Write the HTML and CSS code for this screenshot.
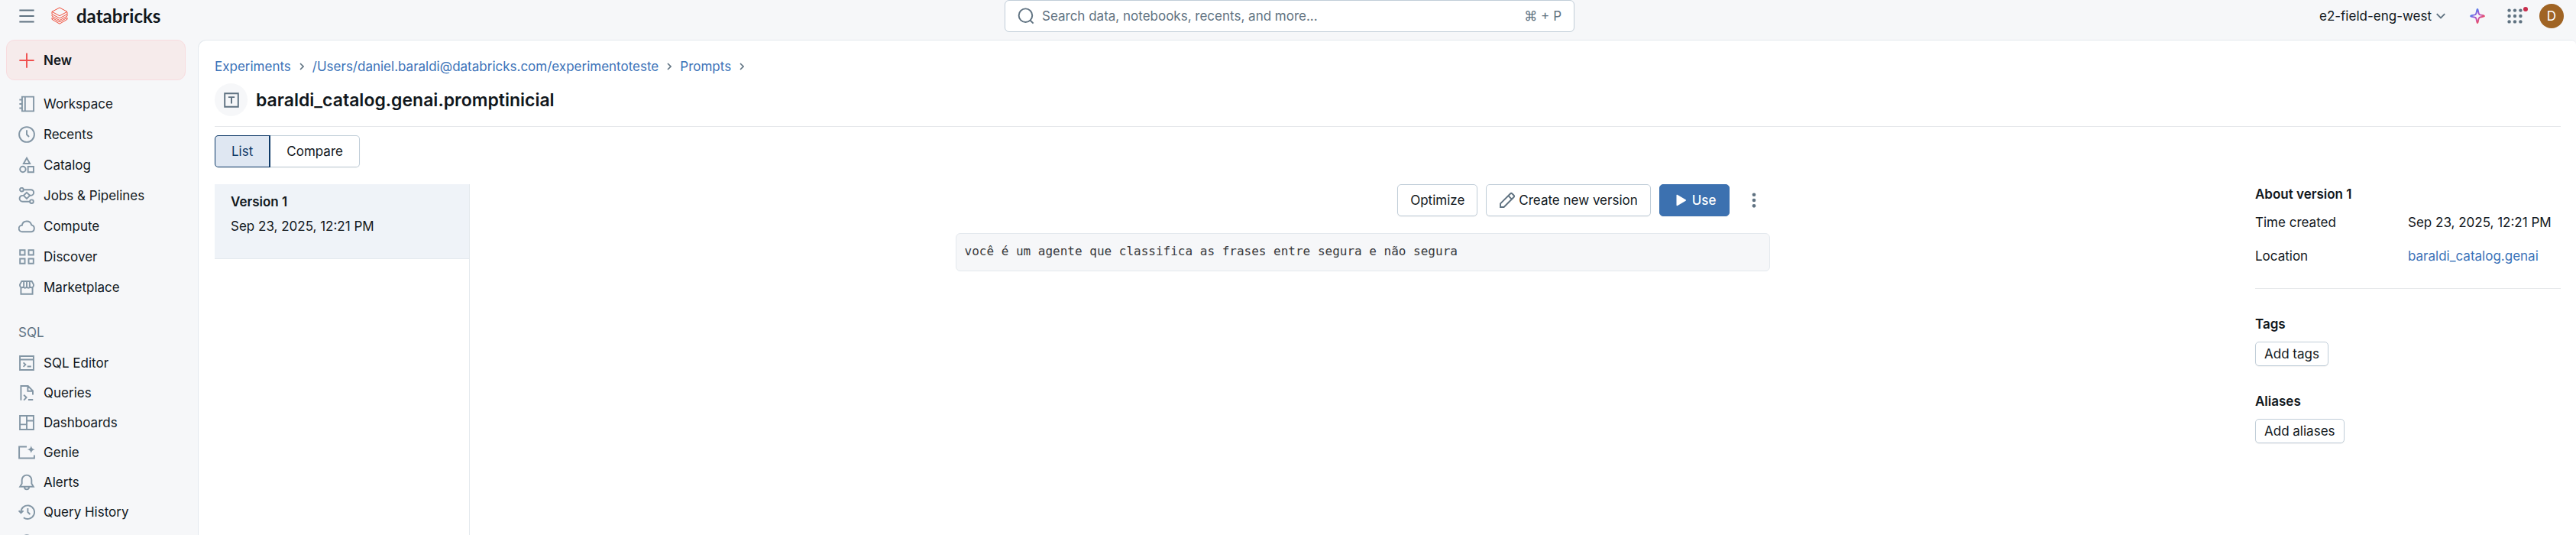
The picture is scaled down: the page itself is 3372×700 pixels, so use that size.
FILE: index.html
```html
<!DOCTYPE html>
<html lang="en">
<head>
<meta charset="utf-8">
<title>baraldi_catalog.genai.promptinicial</title>
<link rel="stylesheet" href="styles.css">
</head>
<body>
<header class="topbar">
  <div class="brand">
    <button class="icon-button" aria-label="Menu"><svg class="icon" viewBox="0 0 16 16"><path d="M1 2.600h14M1 8h14M1 13.400h14"/></svg></button>
    <a class="logo" href="#">
      <svg class="logo-mark" viewBox="0 0 22 24"><path d="M1 6.300 11 1l10 5.300L11 11.700zM1 6.300v3.200l10 5.400 10-5.400V7M1 12l10 5.600L21 12V9.500M1 12v-1.500M1 14.200v2.100l10 5.900 10-5.900v-2.200L11 19.800 1 14.200"/></svg>
      <span class="logo-text">databricks</span>
    </a>
  </div>
  <div class="search">
    <svg class="icon" viewBox="0 0 16 16"><circle cx="7.600" cy="7.400" r="6.400"/><path d="m12 12 3 3"/></svg>
    <input class="search-input" type="text" aria-label="Search" placeholder="Search data, notebooks, recents, and more...">
    <span class="shortcut">⌘ + P</span>
  </div>
  <div class="account">
    <button class="workspace-button">e2-field-eng-west<svg class="chevron" viewBox="0 0 12 12"><path d="m1.500 3.500 4.500 4.500 4.500-4.500"/></svg></button>
    <button class="icon-button" aria-label="Assistant"><svg class="icon" viewBox="0 0 16 16"><defs><linearGradient id="spark" x1="0" y1="0" x2="1" y2="1"><stop offset=".2" stop-color="#4a7ff0"/><stop offset=".5" stop-color="#b44ac8"/><stop offset=".8" stop-color="#f0505a"/></linearGradient></defs><path class="spark" d="M8 1.500c.8 0 .6 4.200 1.800 5s4.700.7 4.700 1.500-3.500.6-4.700 1.500-1 5-1.800 5-.6-4.200-1.800-5S1.500 8.800 1.500 8s3.500-.7 4.700-1.500 1-5 1.800-5Z"/></svg></button>
    <button class="icon-button apps" aria-label="Apps"><svg class="icon solid" viewBox="0 0 16 16"><circle cx="2.600" cy="2.600" r="1.600"/><circle cx="8" cy="2.600" r="1.600"/><circle cx="13.400" cy="2.600" r="1.600"/><circle cx="2.600" cy="8" r="1.600"/><circle cx="8" cy="8" r="1.600"/><circle cx="13.400" cy="8" r="1.600"/><circle cx="2.600" cy="13.400" r="1.600"/><circle cx="8" cy="13.400" r="1.600"/><circle cx="13.400" cy="13.400" r="1.600"/></svg><span class="badge"></span></button>
    <button class="avatar">D</button>
  </div>
</header>
<div class="shell">
  <nav class="sidebar">
    <button class="new-button"><svg class="icon" viewBox="0 0 16 16"><path d="M8 1v14M1 8h14"/></svg>New</button>
    <ul class="nav-list">
      <li><a class="nav-link" href="#"><svg class="icon" viewBox="0 0 16 16"><path d="M3.600 1.200h11v13.600h-11zM6.400 1.200v13.600M1 4h2.600M1 8h2.600M1 12h2.600"/></svg>Workspace</a></li>
      <li><a class="nav-link" href="#"><svg class="icon" viewBox="0 0 16 16"><circle cx="8" cy="8" r="7.200"/><path d="M8 3.800V8l2.200 2.200"/></svg>Recents</a></li>
      <li><a class="nav-link" href="#"><svg class="icon" viewBox="0 0 16 16"><path d="M8 1.300 11 6.500H5zM9.200 9.400h5.300v5.300H9.200z"/><circle cx="4.300" cy="12" r="2.700"/></svg>Catalog</a></li>
      <li><a class="nav-link" href="#"><svg class="icon" viewBox="0 0 16 16"><circle cx="3.200" cy="2.300" r="1.700"/><circle cx="12.700" cy="13.600" r="1.700"/><path d="M4.900 2.300h7a2.700 2.700 0 0 1 0 5.500h-1M11 13.600H4a2.800 2.800 0 0 1 0-5.700h1.200M8 5l3 2.900-3 2.900-3-2.900z"/></svg>Jobs &amp; Pipelines</a></li>
      <li><a class="nav-link" href="#"><svg class="icon" viewBox="0 0 16 16"><path d="M3.700 13.300a3.100 3.100 0 0 1-.2-6.200 4.600 4.600 0 0 1 9-.3 3.300 3.300 0 0 1-.2 6.500z"/></svg>Compute</a></li>
      <li><a class="nav-link" href="#"><svg class="icon" viewBox="0 0 16 16"><path d="M1.600 1.600h4.600v4.600H1.600zM9.800 1.600h4.600v4.600H9.800zM1.600 9.800h4.600v4.600H1.600zM9.800 9.800h4.600v4.600H9.800z"/></svg>Discover</a></li>
      <li><a class="nav-link" href="#"><svg class="icon" viewBox="0 0 16 16"><path d="M2.500 8v6.300h11V8M3.200 2.200h9.600l1.700 3v1.300a2 2 0 0 1-3.300 1.200 2 2 0 0 1-3.200 0 2 2 0 0 1-3.200 0A2 2 0 0 1 1.500 6.500V5.200zM5.200 2.200v5M8 2.200v5M10.800 2.200v5"/></svg>Marketplace</a></li>
    </ul>
    <h2 class="nav-heading">SQL</h2>
    <ul class="nav-list compact">
      <li><a class="nav-link" href="#"><svg class="icon" viewBox="0 0 16 16"><path d="M1.500 1.500h13v13h-13zM1.500 4.700h13M4.800 7.500l2 2-2 2M8.500 11.300h3.700"/></svg>SQL Editor</a></li>
      <li><a class="nav-link" href="#"><svg class="icon" viewBox="0 0 16 16"><path d="M2.500 15V1.500h6.700l4.600 4.600v3.700M9 1.500v4.800h4.800M5.200 10l2.500 2.400L5.200 15M9.400 14.500H14"/></svg>Queries</a></li>
      <li><a class="nav-link" href="#"><svg class="icon" viewBox="0 0 16 16"><path d="M1.500 1.500h13v13h-13zM8 1.500v13M8 6.200h6.500M1.500 9.700H8"/></svg>Dashboards</a></li>
      <li><a class="nav-link" href="#"><svg class="icon" viewBox="0 0 16 16"><path d="M8 2.500H.8v11h14.400v-3"/><path class="fill" d="M12.200 1.500c.4 2.400 1.300 3.300 3.600 3.700-2.300.4-3.200 1.300-3.600 3.600-.4-2.300-1.300-3.200-3.600-3.600 2.300-.4 3.200-1.300 3.600-3.700Z"/></svg>Genie</a></li>
      <li><a class="nav-link" href="#"><svg class="icon" viewBox="0 0 16 16"><path d="M8 1.200a4.600 4.600 0 0 1 4.600 4.600v3.400l1.800 3H1.600l1.800-3V5.800A4.600 4.600 0 0 1 8 1.200ZM5.800 12.600a2.200 2.200 0 0 0 4.400 0"/></svg>Alerts</a></li>
      <li><a class="nav-link" href="#"><svg class="icon" viewBox="0 0 16 16"><path d="M2.500 8.500A6.400 6.400 0 1 1 5 13.200M.4 6.700l2.100 2.100 2.300-2M9 4.300V8l2.200 2.200"/></svg>Query History</a></li>
      <li><a class="nav-link" href="#" aria-label="SQL Warehouses"><svg class="icon" viewBox="0 0 16 16"><path d="M3.700 11.500a3 3 0 0 1-.2-6 4.600 4.600 0 0 1 9-.3 3.300 3.300 0 0 1-.2 6.300"/></svg></a></li>
    </ul>
  </nav>
  <main class="panel">
    <nav class="breadcrumb" aria-label="Breadcrumb">
      <a href="#">Experiments</a><svg class="crumb-arrow" viewBox="0 0 6 10"><path d="m1 1 4 4-4 4"/></svg>
      <a href="#">/Users/daniel.baraldi@databricks.com/experimentoteste</a><svg class="crumb-arrow" viewBox="0 0 6 10"><path d="m1 1 4 4-4 4"/></svg>
      <a href="#">Prompts</a><svg class="crumb-arrow" viewBox="0 0 6 10"><path d="m1 1 4 4-4 4"/></svg>
    </nav>
    <div class="title-row">
      <span class="title-icon"><svg class="icon" viewBox="0 0 16 16"><path d="M1.600 1.600h12.800v12.800H1.600zM5 5.200h6M8 5.200v6"/></svg></span>
      <h1 class="title">baraldi_catalog.genai.promptinicial</h1>
    </div>
    <div class="segmented">
      <button class="segment selected" aria-pressed="true">List</button><button class="segment" aria-pressed="false">Compare</button>
    </div>
    <div class="columns">
      <section class="versions">
        <a class="version" href="#"><strong>Version 1</strong><span>Sep 23, 2025, 12:21 PM</span></a>
      </section>
      <section class="detail">
        <div class="actions">
          <button class="button">Optimize</button>
          <button class="button with-icon"><svg class="icon" viewBox="0 0 16 16"><path d="M1.500 14.500v-3.300l9.400-9.400a1.300 1.300 0 0 1 1.800 0l1.500 1.500a1.300 1.300 0 0 1 0 1.800l-9.400 9.400zM9 3.700l3.300 3.300"/></svg>Create new version</button>
          <button class="button primary"><svg class="icon solid" viewBox="0 0 16 16"><path d="M4 3.200v9.600a.5.500 0 0 0 .8.400l8-4.700a.6.600 0 0 0 0-1l-8-4.700a.5.500 0 0 0-.8.400z"/></svg>Use</button>
          <button class="icon-button more" aria-label="More"><svg class="icon solid" viewBox="0 0 16 16"><circle cx="8" cy="2.700" r="1.700"/><circle cx="8" cy="8" r="1.700"/><circle cx="8" cy="13.300" r="1.700"/></svg></button>
        </div>
        <pre class="prompt">você é um agente que classifica as frases entre segura e não segura</pre>
      </section>
      <aside class="about">
        <h2 class="about-heading">About version 1</h2>
        <dl class="facts">
          <dt>Time created</dt><dd>Sep 23, 2025, 12:21 PM</dd>
          <dt>Location</dt><dd><a href="#">baraldi_catalog.genai</a></dd>
        </dl>
        <section class="about-group">
          <h2 class="about-heading">Tags</h2>
          <button class="button small">Add tags</button>
        </section>
        <section class="about-group">
          <h2 class="about-heading">Aliases</h2>
          <button class="button small">Add aliases</button>
        </section>
      </aside>
    </div>
  </main>
</div>
</body>
</html>
```
FILE: styles.css
```css
* { box-sizing: border-box; }

body {
  margin: 0;
  height: 100vh;
  overflow: hidden;
  display: flex;
  flex-direction: column;
  background: #f6f7f9;
  color: #11171c;
  font: 17px/26px Inter, "Noto Sans", sans-serif;
}

a { color: #3a72b8; text-decoration: none; }
button { font: inherit; color: inherit; cursor: pointer; }
h1, h2, ul, dl, dd, pre { margin: 0; padding: 0; }
ul { list-style: none; }

.icon {
  width: 22px;
  height: 22px;
  flex: none;
  fill: none;
  stroke: currentColor;
  stroke-width: 1.4;
}
.icon.solid, .icon .fill { fill: currentColor; stroke: none; }
.icon .spark { stroke: url(#spark); stroke-linejoin: round; }

.icon-button {
  display: flex;
  padding: 0;
  border: 0;
  background: none;
  color: #5f7281;
}

/* Top bar */
.topbar {
  flex: none;
  display: grid;
  grid-template-columns: 1fr minmax(0, 746px) 1fr;
  align-items: center;
  height: 52px;
  padding: 0 16px 12px 20px;
}
.brand, .logo, .account { display: flex; align-items: center; }
.brand { gap: 20px; padding-left: 4px; }
.logo { gap: 10px; color: #11171c; }
.logo-mark { width: 24px; height: 24px; fill: none; stroke: #f0503c; stroke-width: 1; }
.logo-text { font: 700 24px/30px Lato, sans-serif; }

.search {
  display: flex;
  align-items: center;
  gap: 10px;
  height: 42px;
  padding: 0 16px;
  border: 1px solid #c0cdd8;
  border-radius: 6px;
  background: #fff;
  color: #5f7281;
}
.search-input {
  flex: 1;
  min-width: 0;
  padding: 0;
  border: 0;
  outline: 0;
  background: none;
  font: inherit;
}
.search-input::placeholder { color: #5f7281; opacity: 1; }

.account { justify-content: flex-end; }
.workspace-button {
  display: flex;
  align-items: center;
  gap: 5px;
  margin-right: 30px;
  padding: 0;
  border: 0;
  background: none;
}
.chevron { width: 14px; height: 14px; fill: none; stroke: #5f7281; stroke-width: 1.6; }
.apps { position: relative; margin: 0 21px 0 27px; }
.badge {
  position: absolute;
  top: -1px;
  right: -6px;
  width: 6px;
  height: 6px;
  border-radius: 50%;
  background: #c82d4c;
}
.avatar {
  width: 32px;
  height: 32px;
  padding: 0;
  border: 0;
  border-radius: 50%;
  background: #a06424;
  color: #fff;
}

/* Sidebar */
.shell { flex: 1; min-height: 0; display: flex; }
.sidebar { flex: none; width: 259px; padding: 0 16px 0 8px; overflow: hidden; }
.new-button {
  display: flex;
  align-items: center;
  gap: 11px;
  width: 100%;
  height: 53px;
  margin-bottom: 11px;
  padding: 0 15px;
  border: 1px solid #f8dcdf;
  border-radius: 11px;
  background: #f6ebeb;
  font-weight: 600;
}
.new-button .icon { color: #f0504f; }
.nav-link {
  display: flex;
  align-items: center;
  gap: 11px;
  height: 40px;
  padding: 0 16px;
  color: #11171c;
}
.compact .nav-link { height: 39px; }
.nav-link .icon { color: #8396a5; }
.nav-heading {
  margin: 26px 0 7px;
  padding: 0 16px;
  color: #5f7281;
  font-size: 17px;
  font-weight: 400;
}

/* Main panel */
.panel {
  flex: 1;
  min-width: 0;
  display: flex;
  flex-direction: column;
  padding: 21px 20px 0 21px;
  border: solid #e4e9ee;
  border-width: 1px 0 0 1px;
  border-radius: 11px 6px 0 0;
  background: #fff;
}
.breadcrumb { display: flex; align-items: center; gap: 11px; }
.crumb-arrow { width: 6px; height: 10px; fill: none; stroke: #5f7281; stroke-width: 1.6; }

.title-row {
  display: flex;
  align-items: center;
  gap: 11px;
  padding: 9px 0 13px;
  border-bottom: 1px solid #e6e8eb;
}
.title-icon {
  display: flex;
  align-items: center;
  justify-content: center;
  width: 43px;
  height: 43px;
  border-radius: 50%;
  background: #f6f7f9;
  color: #5f7281;
}
.title { font-size: 23px; line-height: 32px; font-weight: 600; }

.segmented { display: flex; margin: 11px 0 22px; }
.segment {
  height: 42px;
  padding: 0 21px;
  border: 1px solid #c0cdd8;
  border-left: 0;
  border-radius: 0 5px 5px 0;
  background: #fff;
  box-shadow: 0 1px 1px #0000000d;
}
.segment.selected {
  border: 1px solid #0e3a68;
  border-right-width: 2px;
  border-radius: 5px 0 0 5px;
  background: #dfe7f2;
  color: #0e3a68;
}

.columns { flex: 1; display: flex; min-height: 0; }
.versions { flex: none; width: 334px; border-right: 1px solid #e4e9ee; }
.version {
  display: flex;
  flex-direction: column;
  gap: 6px;
  height: 98px;
  padding: 10px 21px;
  border-bottom: 1px solid #e4e9ee;
  background: #eff3f8;
  color: #11171c;
}
.version strong, .about-heading { font-size: 17px; font-weight: 600; }

.detail { flex: 1; max-width: 1066px; margin: 0 auto; }
.actions { display: flex; justify-content: flex-end; gap: 11px; margin-bottom: 22px; }
.button {
  display: flex;
  align-items: center;
  gap: 4px;
  height: 42px;
  padding: 0 16px;
  border: 1px solid #c0cdd8;
  border-radius: 5px;
  background: #fff;
  box-shadow: 0 1px 1px #0000000d;
}
.button .icon { color: #5f7281; }
.button.primary { border-color: #3c71b0; background: #3c71b0; color: #fff; font-weight: 500; }
.button.primary .icon { color: #fff; }
.button.small { height: 32px; padding: 0 11px; }
.more { align-items: center; width: 42px; justify-content: center; }
.prompt {
  min-height: 50px;
  padding: 10px 11px;
  border: 1px solid #e4e9ee;
  border-radius: 6px;
  background: #f6f7f9;
  color: #38393c;
  font: 16px/26px "DejaVu Sans Mono", monospace;
  white-space: pre-wrap;
}

.about { flex: none; width: 400px; }
.facts {
  display: grid;
  grid-template-columns: 200px 1fr;
  row-gap: 18px;
  margin-top: 11px;
  padding-bottom: 29px;
  border-bottom: 1px solid #e6e8eb;
}
.about-group { margin-top: 33px; }
.about-group .button { margin-top: 10px; }
```
